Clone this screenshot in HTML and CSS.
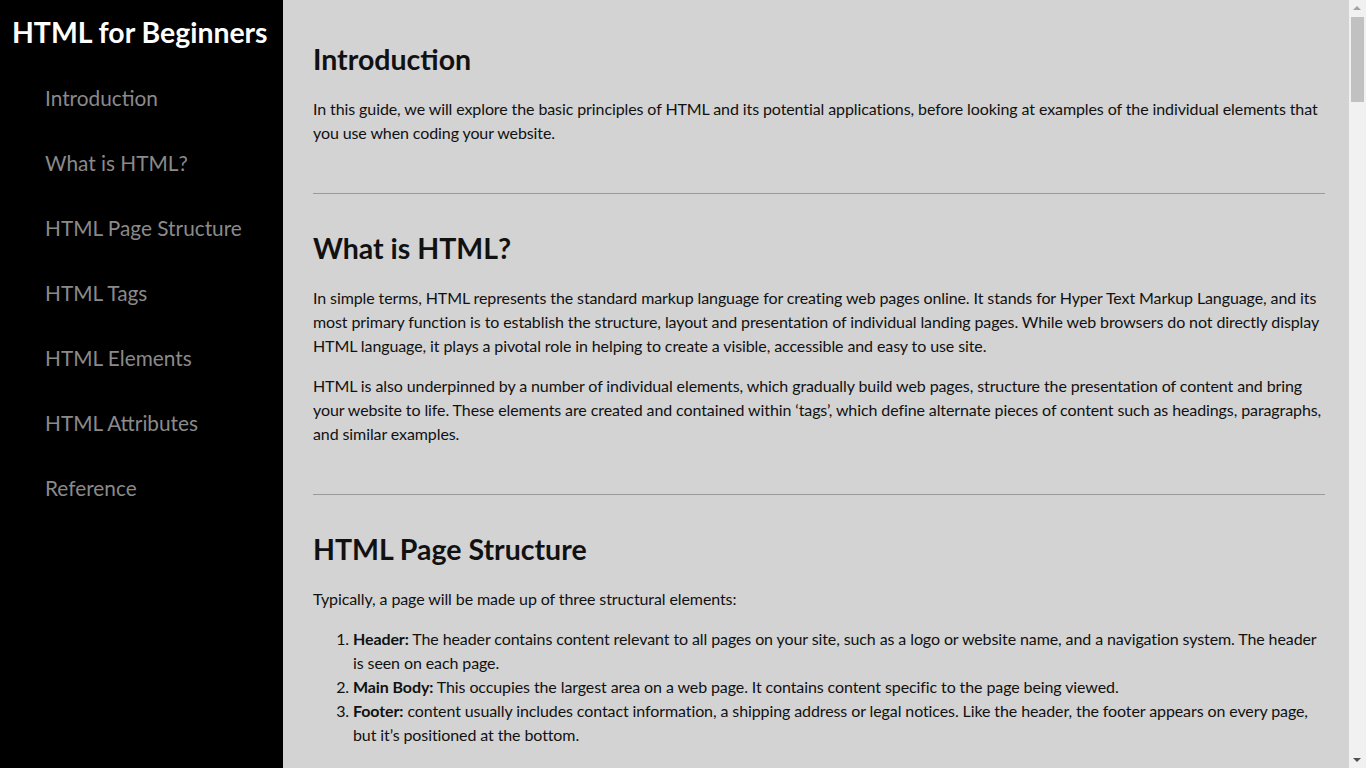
FILE: index.html
```html
<!DOCTYPE html>
<html lang="en">
<head>
<meta charset="utf-8">
<title>HTML for Beginners</title>
<link rel="stylesheet" href="styles.css">
</head>
<body>
<nav class="navbar" id="navbar">
  <header class="nav-title">HTML for Beginners</header>
  <ul class="nav-list">
    <li><a class="nav-link" href="#Introduction">Introduction</a></li>
    <li><a class="nav-link" href="#What_is_HTML?">What is HTML?</a></li>
    <li><a class="nav-link" href="#HTML_Page_Structure">HTML Page Structure</a></li>
    <li><a class="nav-link" href="#HTML_Tags">HTML Tags</a></li>
    <li><a class="nav-link" href="#HTML_Elements">HTML Elements</a></li>
    <li><a class="nav-link" href="#HTML_Attributes">HTML Attributes</a></li>
    <li><a class="nav-link" href="#Reference">Reference</a></li>
  </ul>
</nav>
<main class="main-doc" id="main-doc">
  <section class="main-section" id="Introduction">
    <header class="sec-title">Introduction</header>
    <p>In this guide, we will explore the basic principles of HTML and its potential applications, before looking at examples of the individual elements that you use when coding your website.</p>
  </section>
  <hr class="sep">
  <section class="main-section" id="What_is_HTML?">
    <header class="sec-title">What is HTML?</header>
    <p>In simple terms, HTML represents the standard markup language for creating web pages online. It stands for Hyper Text Markup Language, and its most primary function is to establish the structure, layout and presentation of individual landing pages. While web browsers do not directly display HTML language, it plays a pivotal role in helping to create a visible, accessible and easy to use site.</p>
    <p>HTML is also underpinned by a number of individual elements, which gradually build web pages, structure the presentation of content and bring your website to life. These elements are created and contained within ‘tags’, which define alternate pieces of content such as headings, paragraphs, and similar examples.</p>
  </section>
  <hr class="sep">
  <section class="main-section" id="HTML_Page_Structure">
    <header class="sec-title">HTML Page Structure</header>
    <p>Typically, a page will be made up of three structural elements:</p>
    <ol class="list">
      <li><b>Header:</b> The header contains content relevant to all pages on your site, such as a logo or website name, and a navigation system. The header is seen on each page.</li>
      <li><b>Main Body:</b> This occupies the largest area on a web page. It contains content specific to the page being viewed.</li>
      <li><b>Footer:</b> content usually includes contact information, a shipping address or legal notices. Like the header, the footer appears on every page, but it’s positioned at the bottom.</li>
    </ol>
    <p>These three structural elements are wrapped in the body element, which itself sits inside the html element alongside the head element. The head holds information about the page, such as its title, character set and links to stylesheets.</p>
    <pre class="code">&lt;!DOCTYPE html&gt;
&lt;html&gt;
  &lt;head&gt;
    &lt;title&gt;Page title&lt;/title&gt;
  &lt;/head&gt;
  &lt;body&gt;
    &lt;header&gt;...&lt;/header&gt;
    &lt;main&gt;...&lt;/main&gt;
    &lt;footer&gt;...&lt;/footer&gt;
  &lt;/body&gt;
&lt;/html&gt;</pre>
  </section>
  <hr class="sep">
  <section class="main-section" id="HTML_Tags">
    <header class="sec-title">HTML Tags</header>
    <p>Tags are used to mark up the start and end of an HTML element. They consist of the element name wrapped in angle brackets. Most tags come in pairs: an opening tag and a closing tag, where the closing tag includes a forward slash before the element name.</p>
    <p>Some elements, known as empty or void elements, have no closing tag because they hold no content. Common examples include the line break, the image and the horizontal rule.</p>
    <ul class="list">
      <li>&lt;p&gt; defines a paragraph of text.</li>
      <li>&lt;h1&gt; to &lt;h6&gt; define headings, from the most important to the least.</li>
      <li>&lt;a&gt; defines a hyperlink to another page or resource.</li>
      <li>&lt;img&gt; embeds an image in the page.</li>
      <li>&lt;br&gt; inserts a single line break.</li>
    </ul>
    <p>Tags are not displayed by the browser, but they tell it how to interpret and show the content placed between them.</p>
  </section>
  <hr class="sep">
  <section class="main-section" id="HTML_Elements">
    <header class="sec-title">HTML Elements</header>
    <p>An HTML element is everything from the start tag to the end tag, including the content in between. Elements can be nested, which means that an element can contain other elements. In fact, every HTML document consists of nested elements.</p>
    <p>Elements are usually divided into two groups. Block-level elements always start on a new line and take up the full width available, such as div, p and section. Inline elements do not start on a new line and only take up as much width as necessary, such as span, a and strong.</p>
    <pre class="code">&lt;p&gt;This is a &lt;strong&gt;paragraph&lt;/strong&gt; with a &lt;a href="#"&gt;link&lt;/a&gt;.&lt;/p&gt;</pre>
    <p>Never skip the end tag. Some elements will display correctly even if you forget it, but unexpected results and errors may occur if you do.</p>
    <p>HTML is not case sensitive, so &lt;P&gt; means the same as &lt;p&gt;. However, lowercase is recommended and is required in stricter document types such as XHTML.</p>
  </section>
  <hr class="sep">
  <section class="main-section" id="HTML_Attributes">
    <header class="sec-title">HTML Attributes</header>
    <p>Attributes provide additional information about elements. They are always specified in the start tag and usually come in name and value pairs, such as name="value".</p>
    <ul class="list">
      <li>The href attribute of an anchor specifies the URL of the page the link goes to.</li>
      <li>The src attribute of an image specifies the path to the image to be displayed.</li>
      <li>The width and height attributes provide size information for images.</li>
      <li>The alt attribute specifies an alternate text for an image, if it cannot be displayed.</li>
      <li>The style attribute is used to add styles to an element, such as colour, font and size.</li>
      <li>The lang attribute of the html tag declares the language of the web page.</li>
      <li>The title attribute defines some extra information about an element.</li>
    </ul>
    <pre class="code">&lt;a href="https://example.com" title="Example"&gt;Visit the site&lt;/a&gt;
&lt;img src="logo.png" alt="Company logo" width="200" height="80"&gt;</pre>
    <p>It is good practice to always quote attribute values. Double quotes are the most common, but single quotes can also be used, particularly when the value itself contains double quotes.</p>
    <p>Like element names, attribute names are not case sensitive, but lowercase is recommended for consistency and readability across your documents.</p>
  </section>
  <hr class="sep">
  <section class="main-section" id="Reference">
    <header class="sec-title">Reference</header>
    <p>All the documentation in this page is adapted from introductory guides to HTML, and from the public reference material on elements and attributes.</p>
    <p>For further reading, consult the living standard maintained by the WHATWG, as well as the extensive developer documentation available for every element and attribute described above.</p>
    <p>Practising by building small pages of your own is the best way to become comfortable with HTML. Start with a simple structure, add headings and paragraphs, then experiment with links, images and lists.</p>
    <p>Once you are confident with the basics, you can move on to styling your pages with CSS and adding interactivity with JavaScript.</p>
  </section>
</main>
<div class="scrollbar" aria-hidden="true">
  <span class="sb-arrow sb-up"></span>
  <span class="sb-thumb"></span>
  <span class="sb-arrow sb-down"></span>
</div>
</body>
</html>
```
FILE: styles.css
```css
html, body {
  margin: 0;
  padding: 0;
}

body {
  font-family: Lato, "Open Sans", sans-serif;
  background: #d3d3d3;
  color: #111;
  font-size: 16px;
  line-height: 24px;
}

.navbar {
  position: fixed;
  top: 0;
  left: 0;
  width: 283px;
  height: 100vh;
  background: #000;
}

.nav-title {
  color: #fff;
  font-weight: 700;
  font-size: 28.4px;
  line-height: 36px;
  padding: 14px 0 0 12px;
}

.nav-list {
  list-style: none;
  margin: 0;
  padding: 35px 0 0 45px;
  display: flex;
  flex-direction: column;
  gap: 39px;
}

.nav-link {
  color: #8a8a8a;
  text-decoration: none;
  font-size: 20.8px;
  line-height: 26px;
  display: block;
}

.main-doc {
  margin-left: 283px;
  margin-right: 17px;
  padding: 19px 24px 40px 30px;
  letter-spacing: -0.1px;
}

.sec-title {
  font-size: 28.5px;
  font-weight: 700;
  line-height: 40px;
  letter-spacing: 0;
  margin: 20px 0 18px;
}

.main-section p {
  margin: 0 0 16px;
}

.sep {
  border: 0;
  border-top: 1px solid #9a9a9a;
  margin: 48px 0 34px;
}

.list {
  margin: 0 0 16px;
  padding-left: 40px;
}

.list li b {
  font-weight: 700;
}

.code {
  background: #e6e6e6;
  font-family: "Liberation Mono", monospace;
  font-size: 14px;
  line-height: 20px;
  letter-spacing: 0;
  padding: 12px 16px;
  margin: 0 0 16px;
  border-radius: 4px;
}

.scrollbar {
  position: fixed;
  top: 0;
  right: 0;
  width: 17px;
  height: 100vh;
  background: #f1f1f1;
}

.sb-thumb {
  position: absolute;
  top: 17px;
  left: 2px;
  width: 13px;
  height: 85px;
  background: #c1c1c1;
}

.sb-arrow {
  position: absolute;
  left: 4px;
  width: 0;
  height: 0;
  border-left: 4px solid transparent;
  border-right: 4px solid transparent;
}

.sb-up {
  top: 6px;
  border-bottom: 4px solid #a3a3a3;
}

.sb-down {
  bottom: 6px;
  border-top: 4px solid #505050;
}
```
